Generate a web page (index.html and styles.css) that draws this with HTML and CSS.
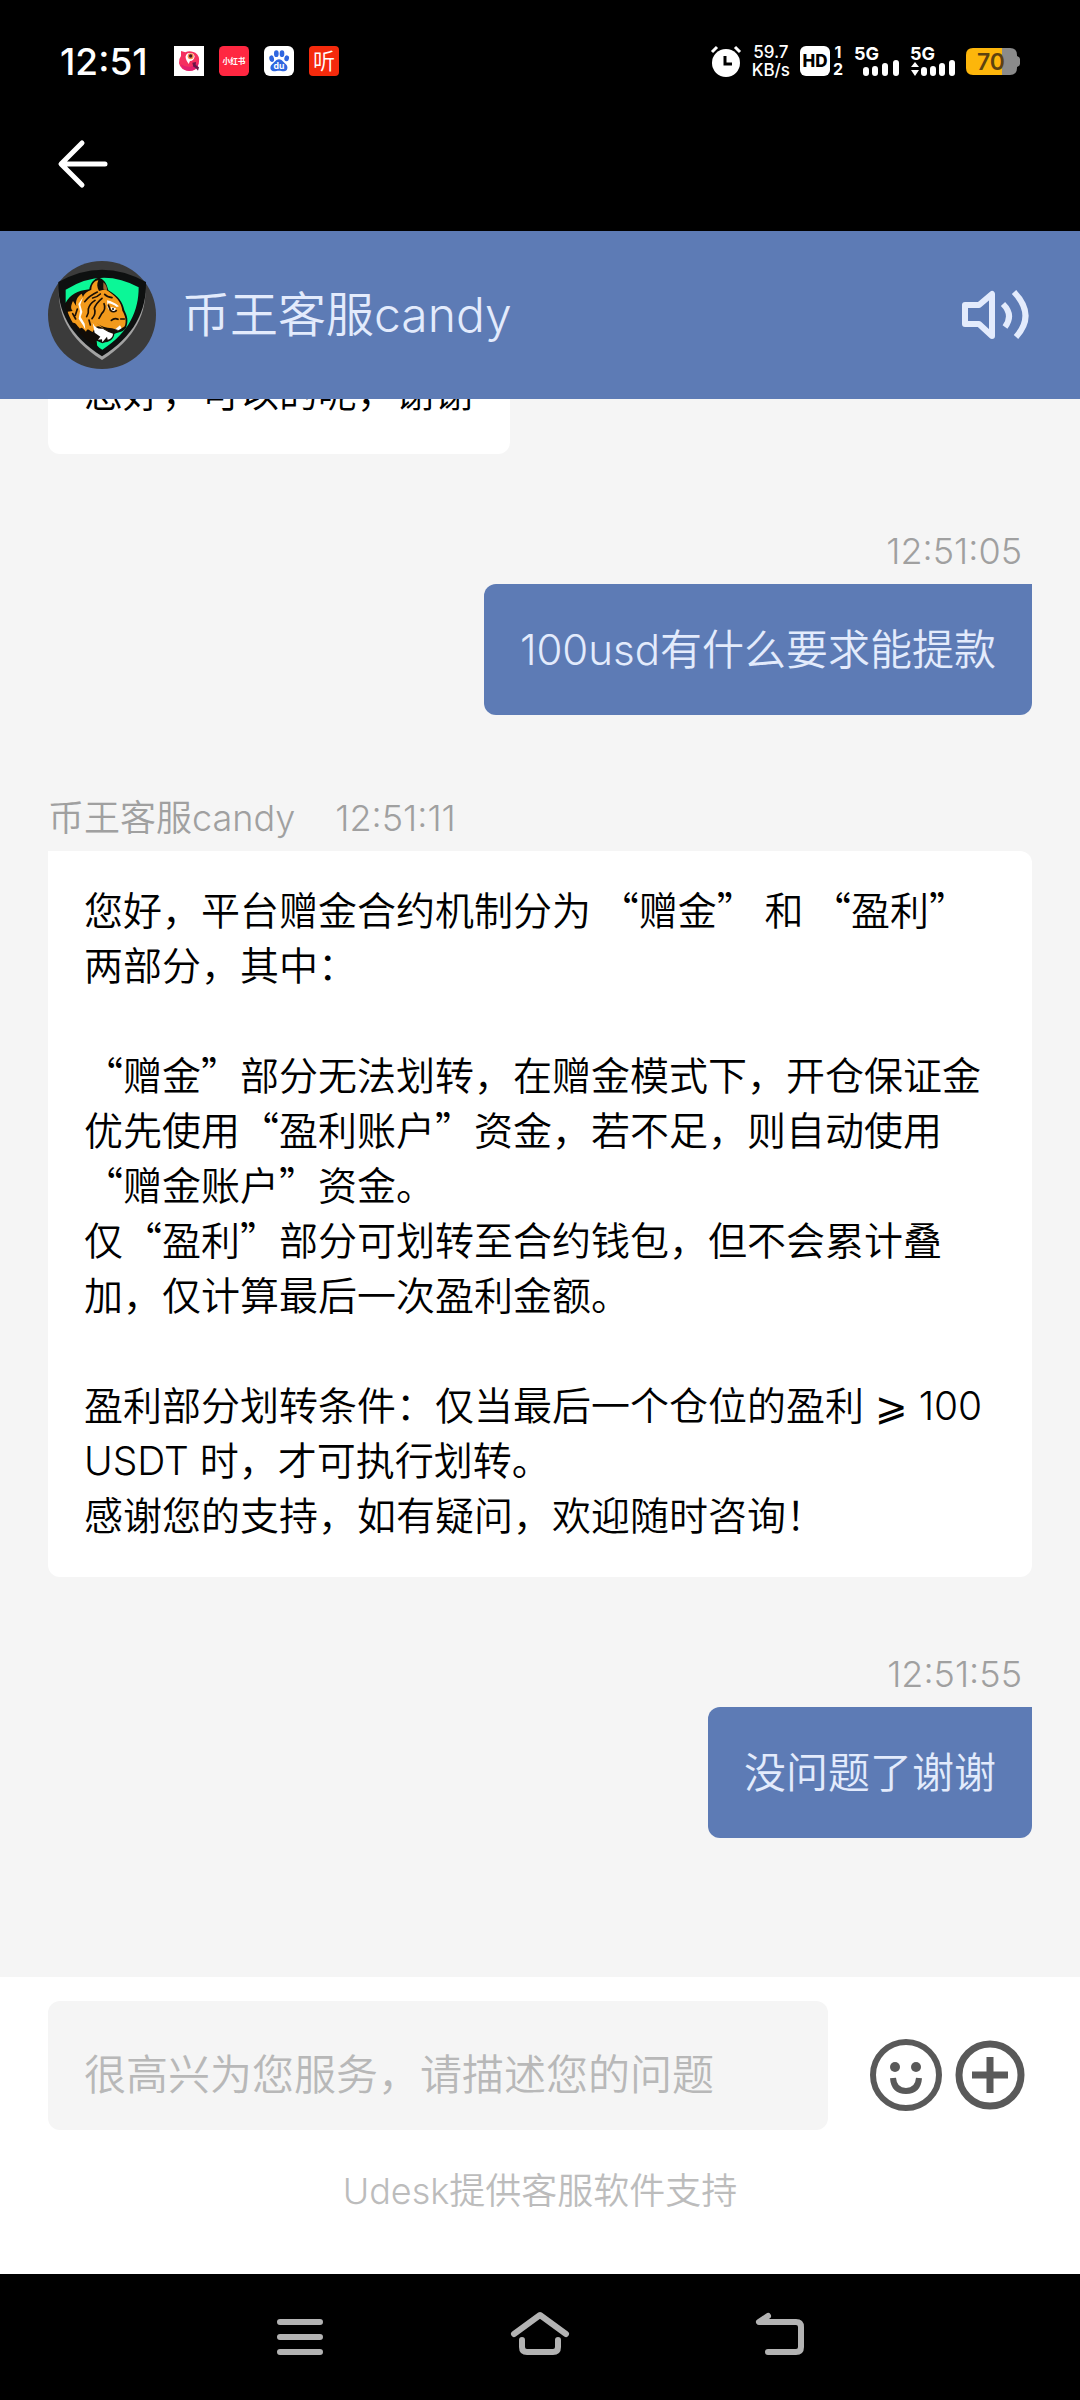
FILE: index.html
```html
<!DOCTYPE html>
<html lang="zh-CN">
<head>
  <meta charset="UTF-8" />
  <meta name="viewport" content="width=device-width, initial-scale=1.0" />
  <title>币王客服candy</title>
  <link rel="stylesheet" href="styles.css">
</head>
<body>
  <div class="status-bar">
    <span class="clock">12:51</span>
    <div class="apps">
      <svg class="app-icon" viewBox="0 0 90 90">
        <rect width="90" height="90" fill="#fff"/>
        <path d="M21 15 L34 19 Q45 13 58 18 L64 20 Q78 30 75 48 Q72 74 46 75 Q20 74 15 52 Q14 38 21 30 Z" fill="#f5305f"/>
        <path d="M20 55 Q44 72 74 50 Q70 74 46 75 Q25 74 20 55 Z" fill="#e3206f"/>
        <path d="M38 44 Q30 30 41 22 Q58 17 62 31 Q60 45 48 45 L44 54 Z" fill="#fff"/>
        <circle cx="50" cy="31" r="9" fill="#f58a4b"/>
        <circle cx="50" cy="30" r="5" fill="#3c1c2a"/>
        <path d="M55 50 L66 48 L65 57 L75 64 L72 74 L65 66 L58 62 Z" fill="#6b1548"/>
      </svg>
      <svg class="app-icon" viewBox="0 0 90 90">
        <rect width="90" height="90" rx="14" fill="#ff2741"/>
        <text x="45" y="54" class="app-text red-note">小红书</text>
      </svg>
      <svg class="app-icon" viewBox="0 0 90 90">
        <rect width="90" height="90" rx="18" fill="#fff"/>
        <g fill="#2f66e0">
          <ellipse cx="23" cy="38" rx="7" ry="10" transform="rotate(-12 23 38)"/>
          <ellipse cx="37" cy="23" rx="7" ry="10"/>
          <ellipse cx="54" cy="23" rx="7" ry="10"/>
          <ellipse cx="68" cy="37" rx="7" ry="9" transform="rotate(12 68 37)"/>
          <path d="M45 40 C54 40 58 49 65 54 C74 61 71 76 60 76 C53 76 50 74 45 74 C40 74 36 76 29 76 C18 75 16 61 25 54 C32 49 36 40 45 40 Z"/>
        </g>
        <text x="45" y="69" class="app-text du">du</text>
      </svg>
      <svg class="app-icon" viewBox="0 0 90 90">
        <rect width="90" height="90" rx="12" fill="#f52a0c"/>
        <text x="45" y="70" class="app-text listen">听</text>
      </svg>
    </div>
    <div class="indicators">
      <svg class="ic-alarm" viewBox="0 0 32 32">
        <circle cx="16" cy="18" r="14" fill="#fff"/>
        <path d="M2 7 L7 2 M25 2 L30 7" stroke="#fff" stroke-width="3"/>
        <path d="M15 11 V19 H22" fill="none" stroke="#000" stroke-width="3"/>
      </svg>
      <span class="net-speed">59.7<br>KB/s</span>
      <svg class="ic-hd" viewBox="0 0 44 30">
        <rect width="30" height="30" rx="6" fill="#fff"/>
        <text x="15" y="21" class="hd-text">HD</text>
        <text x="38" y="12" class="sim-num">1</text>
        <text x="38" y="29" class="sim-num">2</text>
      </svg>
      <svg class="ic-signal" viewBox="0 0 46 30">
        <text x="0" y="14" class="sig-text">5G</text>
        <path d="M12 24 V27 M21 23 V27 M31 20 V27 M42 17 V27" stroke="#fff" stroke-width="6" stroke-linecap="round"/>
      </svg>
      <svg class="ic-signal" viewBox="0 0 46 30">
        <text x="0" y="14" class="sig-text">5G</text>
        <path d="M1 21 L5 16 L9 21 Z M1 24 H9 L5 30 Z" fill="#fff"/>
        <path d="M14 24 V27 M23 23 V27 M32 20 V27 M42 17 V27" stroke="#fff" stroke-width="6" stroke-linecap="round"/>
      </svg>
      <svg class="ic-battery" viewBox="0 0 54 27">
        <path d="M36 0 H44 Q51 0 51 7 V8 Q54 9 54 11 V16 Q54 18 51 19 V20 Q51 27 44 27 H36 Z" fill="#8b8b8b"/>
        <path d="M36 0 H7 Q0 0 0 7 V20 Q0 27 7 27 H36 Z" fill="#fdb60b"/>
        <text x="25" y="22" class="battery-text">70</text>
      </svg>
    </div>
  </div>

  <div class="toolbar">
    <button class="icon-btn" aria-label="返回">
      <svg class="ic-back" viewBox="0 0 50 48">
        <path d="M24 3 L3 24 L24 45 M4 24 H47" fill="none" stroke="#fff" stroke-width="5" stroke-linecap="round" stroke-linejoin="round"/>
      </svg>
    </button>
  </div>

  <header class="chat-header">
    <svg class="avatar" viewBox="24 33 324 324">
      <circle cx="186" cy="195" r="162" fill="#3b3b3b"/>
      <!-- shield -->
      <path d="M57 99 Q186 24 316 99 C322 190 286 266 186 330 C84 266 50 190 57 99 Z" fill="#a3a3a3"/>
      <path d="M55 96 Q186 22 318 96 C320 184 282 258 186 319 C90 258 52 184 55 96 Z" fill="#0e1010"/>
      <path d="M77 119 Q186 51 296 112 C296 180 270 246 187 299 C176 292 166 283 160 272 L156 180 L77 158 Z" fill="#0bf797"/>
      <!-- head outline -->
      <path d="M77 158 C92 134 110 122 148 118 C150 100 163 85 176 83 C190 86 200 98 205 121 C236 140 247 154 253 181 C262 199 266 212 258 234 C250 246 236 246 223 252 C222 265 212 275 196 277 L187 280 L170 272 L172 292 C122 264 88 218 76 178 Z" fill="#120d08"/>
      <!-- fur -->
      <path d="M154 119 C154 103 165 91 175 91 C170 102 171 112 177 123 L196 118 C228 137 245 158 247 182 C257 199 260 215 254 229 C243 239 232 234 220 240 L202 242 C184 232 172 221 163 237 L158 246 C148 243 144 232 138 245 C128 235 124 230 120 236 C110 226 105 216 99 219 C92 207 86 196 83 185 L98 183 C90 174 94 164 99 153 L109 169 C105 151 113 139 125 131 L129 141 C133 129 143 124 154 119 Z" fill="#f39a1c"/>
      <path d="M190 97 Q202 107 201 121 L190 116 Z" fill="#9b6732"/>
      <!-- white patches -->
      <path d="M129 142 L121 164 L127 186 L122 201 L134 221 L136 239 L129 226 L116 206 L120 184 L115 162 Z" fill="#fff"/>
      <path d="M201 151 Q221 155 237 169 L230 171 Q216 160 204 160 L209 183 L203 173 Z" fill="#fff"/>
      <path d="M212 171 L228 175 L223 185 Q213 182 212 171 Z" fill="#fff"/>
      <path d="M158 219 Q168 239 188 236 L205 246 L219 251 Q219 265 203 269 L201 260 L187 277 L186 268 L174 269 L181 260 L164 248 Z" fill="#fff"/>
      <path d="M223 240 L240 226 L245 235 L232 243 Z" fill="#fff"/>
      <!-- stripes -->
      <g fill="none" stroke="#1a0f06" stroke-width="5" stroke-linecap="round">
        <path d="M172 126 Q148 137 134 155"/>
        <path d="M181 132 Q171 142 158 144"/>
        <path d="M194 133 Q201 141 216 143"/>
        <path d="M165 151 Q148 162 145 177 Q147 189 140 200"/>
        <path d="M186 145 Q168 160 163 175 Q169 191 156 206"/>
        <path d="M192 161 Q199 177 185 191 L177 205"/>
        <path d="M147 210 L151 225 M112 177 L106 196 M98 191 L107 207"/>
        <path d="M205 165 L211 181 Q220 189 229 182"/>
        <path d="M214 211 Q224 202 234 208 M242 207 L253 207"/>
      </g>
      <path d="M169 219 Q188 234 216 235 L237 241 L218 247 Q196 242 185 230 Z" fill="#120d08"/>
      <circle cx="219" cy="177" r="3" fill="#120d08"/>
    </svg>
    <h1 class="chat-title">币王客服candy</h1>
    <button class="icon-btn" aria-label="声音">
      <svg class="ic-sound" viewBox="0 0 66 52">
        <path d="M3 16 H17 L30 5 V47 L17 35 H3 Z" fill="none" stroke="#e3ebfc" stroke-width="6" stroke-linejoin="round"/>
        <path d="M41 15 Q52 26 43 38 M52 3 Q74 26 54 48" fill="none" stroke="#e3ebfc" stroke-width="6"/>
      </svg>
    </button>
  </header>

  <main class="messages">
    <div class="message agent">
      <div class="bubble">您好，可以的呢，谢谢</div>
    </div>
    <div class="message user">
      <div class="meta"><time>12:51:05</time></div>
      <div class="bubble">100usd有什么要求能提款</div>
    </div>
    <div class="message agent">
      <div class="meta">币王客服candy<time>12:51:11</time></div>
      <div class="bubble">
        您好，平台赠金合约机制分为 “赠金” 和 “盈利” 两部分，其中：<br>
        <br>
        “赠金”部分无法划转，在赠金模式下，开仓保证金优先使用“盈利账户”资金，若不足，则自动使用“赠金账户”资金。<br>
        仅“盈利”部分可划转至合约钱包，但不会累计叠加，仅计算最后一次盈利金额。<br>
        <br>
        盈利部分划转条件：仅当最后一个仓位的盈利<span class="latin"> <span class="math">⩾</span> 100 USDT </span>时，才可执行划转。<br>
        感谢您的支持，如有疑问，欢迎随时咨询！
      </div>
    </div>
    <div class="message user">
      <div class="meta"><time>12:51:55</time></div>
      <div class="bubble">没问题了谢谢</div>
    </div>
  </main>

  <footer class="composer">
    <div class="composer-row">
      <input class="composer-input" type="text" aria-label="消息" placeholder="很高兴为您服务，请描述您的问题">
      <div class="composer-actions">
        <button class="icon-btn" aria-label="表情">
          <svg class="ic-smile" viewBox="0 0 74 74">
            <circle cx="37" cy="37" r="33" fill="none" stroke="#595959" stroke-width="6"/>
            <circle cx="26" cy="29" r="5" fill="#595959"/>
            <circle cx="47" cy="29" r="5" fill="#595959"/>
            <path d="M24 40 Q25 53 37 53 Q49 53 50 40" fill="none" stroke="#595959" stroke-width="6"/>
          </svg>
        </button>
        <button class="icon-btn" aria-label="更多">
          <svg class="ic-plus" viewBox="0 0 70 70">
            <circle cx="35" cy="35" r="31" fill="none" stroke="#595959" stroke-width="7"/>
            <path d="M35 17 V53 M17 35 H53" stroke="#595959" stroke-width="7"/>
          </svg>
        </button>
      </div>
    </div>
    <p class="powered">Udesk提供客服软件支持</p>
  </footer>

  <nav class="nav-bar">
    <button class="icon-btn" aria-label="最近任务">
      <svg class="ic-nav" viewBox="0 0 60 48">
        <path d="M10 9 H50 M10 24 H50 M10 39 H50"/>
      </svg>
    </button>
    <button class="icon-btn" aria-label="主屏幕">
      <svg class="ic-nav" viewBox="0 0 60 48">
        <path d="M4 21 L30 2 L56 21 M12 27 V34 Q12 39 17 39 H43 Q48 39 48 34 V27"/>
      </svg>
    </button>
    <button class="icon-btn" aria-label="后退">
      <svg class="ic-nav" viewBox="0 0 60 48">
        <path d="M18 3 L9 9 H46 Q51 9 51 14 V34 Q51 39 46 39 H18"/>
      </svg>
    </button>
  </nav>
</body>
</html>
```
FILE: styles.css
```css
* {
  box-sizing: border-box;
}

body {
  margin: 0;
  height: 100vh;
  display: flex;
  flex-direction: column;
  overflow: hidden;
  background-color: #f5f5f5;
  font-family: Inter, "Noto Sans CJK SC", sans-serif;
  font-weight: 350;
  color: #000;
  text-spacing-trim: space-all;
}

svg {
  display: block;
  overflow: visible;
}

.icon-btn {
  border: 0;
  padding: 0;
  background: none;
  cursor: pointer;
}

/* status bar */
.status-bar {
  display: flex;
  align-items: center;
  height: 122px;
  padding: 0 60px;
  flex-shrink: 0;
  background: #000;
  color: #fff;
}

.clock {
  font-size: 37px;
  font-weight: 500;
}

.apps {
  display: flex;
  gap: 15px;
  margin-left: 26px;
}

.app-icon {
  width: 30px;
  height: 30px;
}

.app-text {
  fill: #fff;
  font-weight: 700;
  text-anchor: middle;
}

.red-note {
  font-size: 23px;
}

.du {
  font-size: 26px;
}

.listen {
  font-size: 66px;
  font-weight: 350;
}

.indicators {
  display: flex;
  align-items: center;
  gap: 10px;
  margin-left: auto;
}

.ic-alarm {
  width: 32px;
  height: 32px;
}

.net-speed {
  font-size: 17px;
  line-height: 18px;
  font-weight: 500;
  text-align: center;
}

.ic-hd {
  width: 44px;
  height: 30px;
}

.hd-text {
  fill: #000;
  font-size: 17px;
  font-weight: 800;
  text-anchor: middle;
}

.sim-num {
  fill: #fff;
  font-size: 16px;
  font-weight: 700;
  text-anchor: middle;
}

.ic-signal {
  width: 46px;
  height: 30px;
}

.sig-text {
  fill: #fff;
  font-size: 18px;
  font-weight: 700;
}

.ic-battery {
  width: 54px;
  height: 27px;
}

.battery-text {
  fill: #5c4210;
  font-size: 23px;
  font-weight: 600;
  text-anchor: middle;
}

.toolbar {
  display: flex;
  flex-shrink: 0;
  padding: 18px 58px 43px;
  background: #000;
}

.ic-back {
  width: 50px;
  height: 48px;
}

/* chat header */
.chat-header {
  display: flex;
  align-items: center;
  height: 168px;
  padding: 0 52px 0 48px;
  flex-shrink: 0;
  background: #5d7bb5;
  color: #e3ebfc;
}

.avatar {
  width: 108px;
  height: 108px;
}

.chat-title {
  flex: 1;
  margin: 0 0 8px 26px;
  font-size: 48px;
  font-weight: 350;
}

.ic-sound {
  width: 66px;
  height: 52px;
}

/* messages */
.messages {
  flex: 1;
  min-height: 0;
  display: flex;
  flex-direction: column;
  justify-content: flex-end;
  gap: 72px;
  padding: 0 48px 139px;
  overflow: hidden;
}

.message {
  display: flex;
  flex-direction: column;
  flex-shrink: 0;
  align-items: flex-start;
}

.message.user {
  align-items: flex-end;
}

.meta {
  margin-bottom: 8px;
  font-size: 36px;
  line-height: 50px;
  color: #a0a0a0;
}

.agent .meta {
  margin-top: 6px;
}

.agent .meta time {
  margin-left: 40px;
}

.user .meta {
  padding-right: 10px;
}

.bubble {
  padding: 36px;
  border-radius: 12px;
  font-size: 42px;
  line-height: 59px;
}

/* CJK font first so that curly quotes keep their full width */
.agent .bubble {
  padding: 30px 36px 36px;
  border-top-left-radius: 0;
  background: #fff;
  font-family: "Noto Sans CJK SC", sans-serif;
  font-size: 39px;
  line-height: 55px;
}

.user .bubble {
  border-top-right-radius: 0;
  background: #5d7bb5;
  color: #e3ebfc;
}

.latin {
  font-family: Inter, sans-serif;
  line-height: 1;
}

.math {
  font-family: "DejaVu Sans", sans-serif;
  font-weight: 400;
}

/* composer */
.composer {
  padding: 24px 48px 58px;
  flex-shrink: 0;
  background: #fff;
}

.composer-row {
  display: flex;
  align-items: flex-end;
  gap: 41px;
  padding-right: 7px;
}

.composer-input {
  flex: 1;
  min-width: 0;
  height: 129px;
  padding: 18px 36px 0;
  border: 0;
  border-radius: 12px;
  background: #f5f5f5;
  font-family: inherit;
  font-size: 42px;
  font-weight: 350;
}

.composer-input::placeholder {
  color: #b8b8b8;
  opacity: 1;
}

.composer-actions {
  display: flex;
  align-items: center;
  gap: 12px;
  padding-bottom: 18px;
}

.ic-smile {
  width: 74px;
  height: 74px;
}

.ic-plus {
  width: 70px;
  height: 70px;
}

.powered {
  margin: 36px 0 0;
  font-size: 36px;
  line-height: 50px;
  text-align: center;
  color: #bcbcbc;
}

/* system navigation */
.nav-bar {
  display: flex;
  height: 126px;
  padding: 0 calc(100% / 6);
  flex-shrink: 0;
  background: #000;
}

.nav-bar .icon-btn {
  display: flex;
  flex: 1;
  align-items: center;
  justify-content: center;
}

.ic-nav {
  width: 60px;
  height: 48px;
  fill: none;
  stroke: #b3b3b3;
  stroke-width: 6px;
  stroke-linecap: round;
  stroke-linejoin: round;
}
```
